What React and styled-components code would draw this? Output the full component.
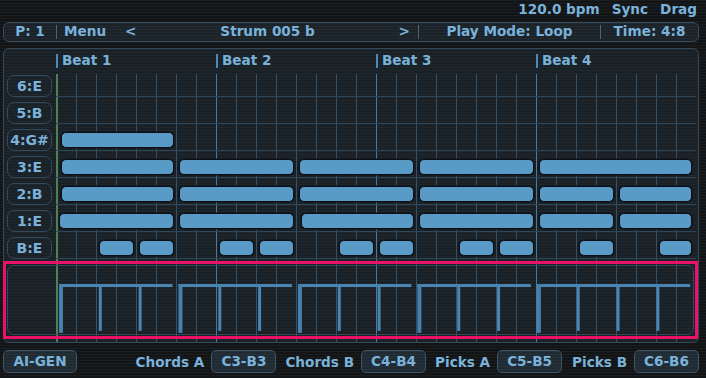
import React from 'react';
import styled, { createGlobalStyle } from 'styled-components';

const BLUE = '#7ab2da';
const NOTE = '#5a9ac7';
const LINE = '#31506a';
const BEAT = '#467aa2';
const GREEN = '#4f8056';
const BORDER = '#34495a';

const Global = createGlobalStyle`
  html, body { margin: 0; padding: 0; }
  body {
    width: 706px; height: 378px; overflow: hidden;
    background: repeating-linear-gradient(to bottom, #1b1e21 0 1px, #121416 1px 3px);
    font-family: "DejaVu Sans", Verdana, sans-serif;
    font-weight: bold;
    color: ${BLUE};
  }
`;

const Screen = styled.div`
  display: flex;
  flex-direction: column;
  width: 706px;
  height: 378px;
  padding: 0 7px 0 3px;
  box-sizing: border-box;
  font-size: 13.6px;
`;

const Status = styled.div`
  height: 18px;
  display: flex;
  justify-content: flex-end;
  align-items: center;
  gap: 12px;
  padding-right: 2px;
`;

const Toolbar = styled.div`
  margin-top: 4px;
  height: 20px;
  box-sizing: border-box;
  display: flex;
  align-items: center;
  border: 1px solid ${BORDER};
  border-radius: 6px;
  background: repeating-linear-gradient(to bottom, #222b32 0 1px, #1b2329 1px 3px);
`;

const Seg = styled.div`
  width: ${p => p.$w}px;
  height: 100%;
  display: flex;
  align-items: center;
  justify-content: ${p => (p.$spread ? 'flex-start' : 'center')};
  padding: ${p => (p.$spread ? '0 8px 0 7px' : '0')};
  box-sizing: border-box;
  line-height: 1;
`;

const Sep = styled.div`
  width: 1px;
  height: 14px;
  background: #4b6578;
`;

const Arrow = styled.span`
  margin-left: ${p => p.$ml || 0}px;
`;

const Title = styled.span`
  flex: 1;
  text-align: center;
`;

const Panel = styled.div`
  margin-top: 6px;
  height: 295px;
  box-sizing: border-box;
  border: 1px solid ${BORDER};
  border-radius: 6px;
  padding-top: 2px;
  display: flex;
  flex-direction: column;
  background: repeating-linear-gradient(to bottom, #1f272d 0 1px, #192026 1px 3px);
`;

const BeatRow = styled.div`
  height: 20px;
  display: grid;
  grid-template-columns: repeat(4, 160px);
  padding-left: 52px;
`;

const BeatCell = styled.div`
  display: flex;
  align-items: center;
  gap: 4px;
  line-height: 1;
  &::before {
    content: '';
    width: 2px;
    height: 14px;
    background: #4f8ab5;
  }
`;

const Body = styled.div`
  margin-top: 3px;
  padding: 1px 0 0 3px;
  display: flex;
  flex-direction: column;
  background-image:
    linear-gradient(${GREEN}, ${GREEN}),
    repeating-linear-gradient(to right, ${BEAT} 0 1px, transparent 1px 160px),
    repeating-linear-gradient(to right, ${LINE} 0 1px, transparent 1px 20px);
  background-size: 2px 100%, 640px 100%, 640px 100%;
  background-position: 52px 0, 52px 0, 52px 0;
  background-repeat: no-repeat;
  flex: 1;
`;

const Rows = styled.div`
  display: grid;
  grid-template-columns: 45px 640px;
  column-gap: 4px;
  row-gap: 5px;
`;

const Label = styled.div`
  height: 22px;
  box-sizing: border-box;
  border: 1px solid ${BORDER};
  border-radius: 7px;
  background: repeating-linear-gradient(to bottom, #1f272e 0 1px, #1a2127 1px 3px);
  display: flex;
  align-items: center;
  justify-content: center;
  line-height: 1;
  font-size: 14px;
`;

const Track = styled.div`
  height: 22px;
  display: grid;
  grid-template-columns: repeat(32, 20px);
  box-shadow: inset 0 -1px 0 #2e465a;
`;

const Note = styled.div`
  grid-column: ${p => p.$c + 1} / span ${p => p.$n};
  margin: 3px ${p => (p.$c + p.$n === 32 ? 4 : 2)}px 3px ${p => p.$ml}px;
  background: ${NOTE};
  border: 1.5px solid #0c1014;
  border-radius: 5px;
  box-shadow: 0 0 0 0.5px #0c1014;
`;

const Selected = styled.div`
  margin: 2px 0 0 -4px;
  width: 695px;
  box-sizing: border-box;
  border: 3px solid #ea1268;
  padding: 1px;
`;

const Velocity = styled.div`
  height: 70px;
  box-sizing: border-box;
  border: 1px solid ${BORDER};
  border-radius: 7px;
  display: flex;
`;

const VelSpacer = styled.div`
  width: 48px;
`;

const BottomBar = styled.div`
  margin-top: 7px;
  height: 23px;
  display: flex;
  align-items: center;
`;

const Btn = styled.div`
  width: ${p => p.$w}px;
  height: 23px;
  box-sizing: border-box;
  border: 1px solid #3e5567;
  border-radius: 5px;
  background: repeating-linear-gradient(to bottom, #26323c 0 1px, #1f2a33 1px 3px);
  display: flex;
  align-items: center;
  justify-content: center;
  margin-right: ${p => p.$mr || 0}px;
  line-height: 1;
`;

const Caption = styled.span`
  margin-left: ${p => (p.$auto ? 'auto' : '0')};
  margin-right: 7px;
`;

const rows = [
  { label: '6:E', notes: [] },
  { label: '5:B', notes: [] },
  { label: '4:G#', notes: [[0, 6, 5]] },
  { label: '3:E', notes: [[0, 6, 5], [6, 6], [12, 6], [18, 6], [24, 8]] },
  { label: '2:B', notes: [[0, 6, 5], [6, 6], [12, 6], [18, 6], [24, 4], [28, 4]] },
  { label: '1:E', notes: [[0, 6, 3], [6, 6], [12, 6, 5], [18, 6], [24, 4], [28, 4]] },
  {
    label: 'B:E',
    notes: [[2, 2], [4, 2], [8, 2], [10, 2], [14, 2], [16, 2], [20, 2], [22, 2], [26, 2], [30, 2]],
  },
];

const groups = [[0, 6], [6, 6], [12, 6], [18, 6], [24, 8]];

function VelocityGraph() {
  const shapes = [];
  groups.forEach(([c, n], gi) => {
    shapes.push(
      <rect key={`h${gi}`} x={c * 20 + 3} y={18} width={n * 20 - 6} height={3} fill="#4a86b3" />
    );
    for (let k = c; k < c + n; k += 2) {
      const first = k === c;
      shapes.push(
        <rect
          key={`v${gi}-${k}`}
          x={k * 20 + 3}
          y={18}
          width={first ? 4 : 3}
          height={first ? 49 : 47}
          fill={first ? '#4681ad' : '#4a86b3'}
        />
      );
    }
  });
  return (
    <svg width="640" height="68" viewBox="0 0 640 68">
      {shapes}
    </svg>
  );
}

export default function App() {
  return (
    <>
      <Global />
      <Screen>
        <Status>
          <span>120.0 bpm</span>
          <span>Sync</span>
          <span>Drag</span>
        </Status>
        <Toolbar>
          <Seg $w={52}>P: 1</Seg>
          <Sep />
          <Seg $w={361} $spread>
            <span>Menu</span>
            <Arrow $ml={19}>&lt;</Arrow>
            <Title>Strum 005 b</Title>
            <Arrow>&gt;</Arrow>
          </Seg>
          <Sep />
          <Seg $w={181}>Play Mode: Loop</Seg>
          <Sep />
          <Seg $w={97}>Time: 4:8</Seg>
        </Toolbar>
        <Panel>
          <BeatRow>
            <BeatCell>Beat 1</BeatCell>
            <BeatCell>Beat 2</BeatCell>
            <BeatCell>Beat 3</BeatCell>
            <BeatCell>Beat 4</BeatCell>
          </BeatRow>
          <Body>
            <Rows>
              {rows.map(r => (
                <React.Fragment key={r.label}>
                  <Label>{r.label}</Label>
                  <Track>
                    {r.notes.map(([c, n, ml]) => (
                      <Note key={c} $c={c} $n={n} $ml={ml ?? 3} />
                    ))}
                  </Track>
                </React.Fragment>
              ))}
            </Rows>
            <Selected>
              <Velocity>
                <VelSpacer />
                <VelocityGraph />
              </Velocity>
            </Selected>
          </Body>
        </Panel>
        <BottomBar>
          <Btn $w={74}>AI-GEN</Btn>
          <Caption $auto>Chords A</Caption>
          <Btn $w={65} $mr={9}>C3-B3</Btn>
          <Caption>Chords B</Caption>
          <Btn $w={65} $mr={9}>C4-B4</Btn>
          <Caption>Picks A</Caption>
          <Btn $w={65} $mr={10}>C5-B5</Btn>
          <Caption>Picks B</Caption>
          <Btn $w={65}>C6-B6</Btn>
        </BottomBar>
      </Screen>
    </>
  );
}
